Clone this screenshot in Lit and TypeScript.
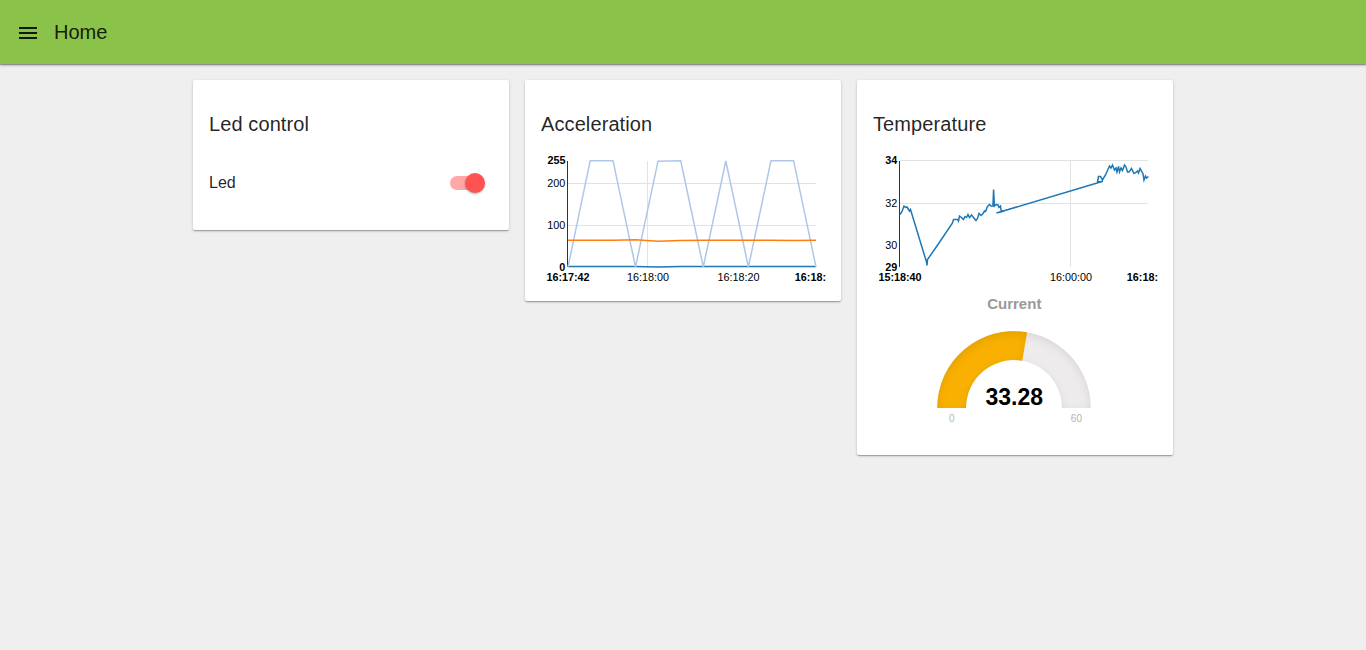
import { LitElement, html, svg, css } from "lit";
import { customElement } from "lit/decorators.js";

interface Label { x: number; y: number; text: string; end?: boolean; bold?: boolean }

const chartStyles = css`
  :host { display: block; }
  svg { display: block; overflow: visible; font-family: "Liberation Sans", Arial, sans-serif; }
  .grid { stroke: #e3e3e3; fill: none; shape-rendering: crispEdges; }
  .axis { stroke: #333; fill: none; shape-rendering: crispEdges; }
  .line { fill: none; stroke-width: 1.5; }
  .blue { stroke: #1f77b4; }
  .pale { stroke: #aec7e8; }
  .orange { stroke: #ff7f0e; }
  .tick { font-size: 10.8px; fill: #000; text-anchor: middle; }
  .end { text-anchor: end; }
  .bold { font-weight: bold; }
`;

const labels = (items: Label[]) => items.map((l) => svg`
  <text class="tick ${l.end ? "end" : ""} ${l.bold ? "bold" : ""}" x=${l.x} y=${l.y}>${l.text}</text>`);

@customElement("acceleration-chart")
class AccelerationChart extends LitElement {
  static styles = chartStyles;
  render() {
    return html`<svg width="284" height="137" viewBox="541 148 284 137">
      <path class="grid" d="M568 183.5H816M568 225.5H816M647.5 161V267"/>
      <path class="axis" d="M567.5 161V267"/>
      <path class="line blue" d="M568 266.5H635L658 267L680 266.5H816"/>
      <path class="line pale" d="M568 267L590.2 160.7H613L635.5 267L658 161.2L680.7 160.8L703.3 267L725.8 161L748.4 267L771 160.7H793.6L816 267"/>
      <path class="line orange" d="M568 240.2H613L635.5 239.8L658 241.2L680.7 240.6L703 240.2H771L793.6 240.6L816 240.2"/>
      ${labels([
        { x: 565.5, y: 164, text: "255", end: true, bold: true },
        { x: 565.3, y: 187, text: "200", end: true },
        { x: 565.3, y: 229, text: "100", end: true },
        { x: 565.3, y: 271, text: "0", end: true, bold: true },
        { x: 568, y: 281, text: "16:17:42", bold: true },
        { x: 648, y: 281, text: "16:18:00" },
        { x: 738.5, y: 281, text: "16:18:20" },
        { x: 826, y: 281, text: "16:18:", end: true, bold: true },
      ])}
    </svg>`;
  }
}

@customElement("temperature-chart")
class TemperatureChart extends LitElement {
  static styles = chartStyles;
  render() {
    return html`<svg width="284" height="137" viewBox="873 148 284 137">
      <path class="grid" d="M900 160.5H1148M900 203.5H1148M1070.5 161V267"/>
      <path class="axis" d="M899.5 161V267"/>
      <path class="line blue" d="M900 214.5L902 211.5L904 206L905.5 207.5L907 207L909.5 211L910.5 209.5L926.5 262L927 265.5L927.5 259.5L938 244.5L952.5 223L953.5 219.5L957.5 219.5L958.5 221L959.5 216L961.5 217.5L963.5 219.5L965 216.5L966.5 217.5L968 214.5L969.5 217.5L971.5 215L973.5 217.5L976 220.5L977.5 218.5L979 213.5L981 215.5L983 213.5L984.5 211L985.5 211.5L987.5 206.5L989.5 204.5L991 206L992.9 206L993.6 189.5L994.4 206L996 204.5L998 205L999 207.5L1000.5 206L1001 210L1003 211.5L996.5 213L1103 181.3L1097.5 182L1098.5 176.5L1100.5 176.5L1102.5 180L1105.5 175L1107.5 170.5L1109.5 166L1111 168L1112.5 165L1114.5 170L1116 168L1117 172L1118.5 166.5L1119.5 172L1121 168L1122.5 170.5L1124.5 165L1126 167L1127.5 172L1129 172L1130.5 170L1131.5 168.5L1133 171.5L1134 173.5L1136 172.5L1137.5 171L1138.5 173L1140 168.5L1141.5 171L1143 174L1144 180L1145.5 176L1146.5 178L1148.5 176.5"/>
      ${labels([
        { x: 897.3, y: 164, text: "34", end: true, bold: true },
        { x: 897.3, y: 207, text: "32", end: true },
        { x: 897.3, y: 249, text: "30", end: true },
        { x: 897.3, y: 271, text: "29", end: true, bold: true },
        { x: 900, y: 281, text: "15:18:40", bold: true },
        { x: 1071, y: 281, text: "16:00:00" },
        { x: 1158, y: 281, text: "16:18:", end: true, bold: true },
      ])}
    </svg>`;
  }
}

@customElement("temperature-gauge")
class TemperatureGauge extends LitElement {
  static styles = css`
    :host { display: block; }
    svg { display: block; font-family: "Liberation Sans", Arial, sans-serif; text-anchor: middle; }
    .title { font-size: 15px; font-weight: bold; fill: #999; }
    .value { font-size: 23px; font-weight: bold; fill: #000; }
    .limit { font-size: 10px; fill: #b3b3b3; }
    .track { fill: #edebeb; }
    .level { fill: #f9b000; }
  `;
  render() {
    return html`<svg width="284" height="154" viewBox="873 285 284 154">
      <defs>
        <filter id="inner">
          <feOffset dx="0" dy="3"/>
          <feGaussianBlur result="blur" stdDeviation="5"/>
          <feComposite operator="out" in="SourceGraphic" in2="blur" result="inverse"/>
          <feFlood flood-color="#000" flood-opacity="0.2"/>
          <feComposite operator="in" in2="inverse" result="shade"/>
          <feComposite operator="over" in="shade" in2="SourceGraphic"/>
        </filter>
      </defs>
      <path class="track" filter="url(#inner)" d="M937.2 408A76.8 76.8 0 0 1 1090.8 408H1062A48 48 0 0 0 966 408Z"/>
      <path class="level" filter="url(#inner)" d="M937.2 408A76.8 76.8 0 0 1 1027.1 332.3L1022.2 360.7A48 48 0 0 0 966 408Z"/>
      <text class="title" x="1014.3" y="309">Current</text>
      <text class="value" x="1014.3" y="405">33.28</text>
      <text class="limit" x="951.8" y="422">0</text>
      <text class="limit" x="1076.4" y="422">60</text>
    </svg>`;
  }
}

@customElement("app-root")
class AppRoot extends LitElement {
  static styles = css`
    :host {
      display: flex; flex-direction: column; height: 100vh; overflow: hidden;
      background: #efefef; color: rgba(0, 0, 0, 0.87);
      font-family: "Liberation Sans", Arial, sans-serif;
    }
    .toolbar {
      display: flex; align-items: center; flex: none; height: 64px; box-sizing: border-box;
      padding-left: 16px; gap: 14px; background: #8bc34a; font-size: 20px;
      box-shadow: 0 1px 3px rgba(0, 0, 0, 0.3), 0 1px 1px rgba(0, 0, 0, 0.26);
    }
    .toolbar svg { display: block; margin-top: 2px; fill: rgba(0, 0, 0, 0.87); }
    .cards { display: flex; justify-content: center; align-items: flex-start; gap: 16px; padding-top: 16px; }
    .card {
      width: 316px; box-sizing: border-box; padding: 32px 16px 16px; background: #fff; border-radius: 2px;
      box-shadow: 0 1px 3px rgba(0, 0, 0, 0.2), 0 1px 1px rgba(0, 0, 0, 0.14), 0 2px 1px -1px rgba(0, 0, 0, 0.12);
    }
    .name { margin: 0 0 12px; font-size: 20px; font-weight: 400; line-height: 24px; letter-spacing: 0.1px; }
    .row {
      display: flex; align-items: center; justify-content: space-between;
      height: 48px; padding: 11px 8px 7px 0; font-size: 16px;
    }
    .switch { display: flex; align-items: center; width: 35px; height: 20px; }
    .bar { width: 34px; height: 14px; flex: none; border-radius: 7px; background: rgba(255, 82, 82, 0.5); }
    .thumb {
      width: 20px; height: 20px; flex: none; margin-left: -19px; border-radius: 50%; background: #ff5252;
      box-shadow: 0 1px 3px rgba(0, 0, 0, 0.2), 0 1px 1px rgba(0, 0, 0, 0.14);
    }
  `;
  render() {
    return html`
      <header class="toolbar">
        <svg width="24" height="24" viewBox="0 0 24 24"><path d="M3 18h18v-2H3v2zm0-5h18v-2H3v2zm0-7v2h18V6H3z"/></svg>
        <span>Home</span>
      </header>
      <main class="cards">
        <section class="card">
          <h2 class="name">Led control</h2>
          <div class="row"><span>Led</span><div class="switch"><div class="bar"></div><div class="thumb"></div></div></div>
        </section>
        <section class="card">
          <h2 class="name">Acceleration</h2>
          <acceleration-chart></acceleration-chart>
        </section>
        <section class="card">
          <h2 class="name">Temperature</h2>
          <temperature-chart></temperature-chart>
          <temperature-gauge></temperature-gauge>
        </section>
      </main>`;
  }
}
